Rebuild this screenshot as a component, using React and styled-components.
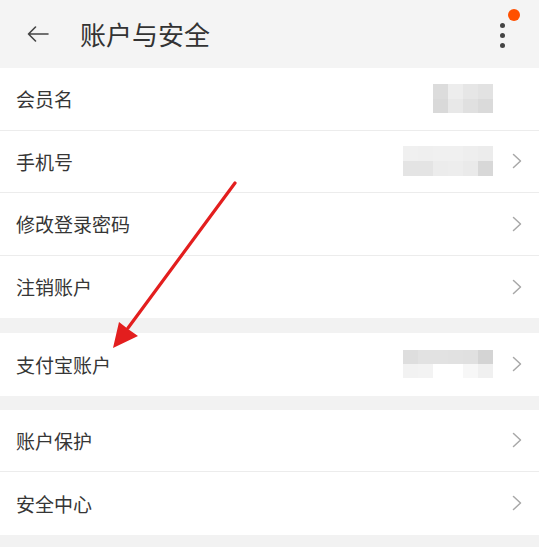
import React from 'react';
import styled, { createGlobalStyle } from 'styled-components';

const GlobalStyle = createGlobalStyle`
  body {
    margin: 0;
    background: #f2f2f2;
    font-family: "Noto Sans CJK SC", "Noto Sans", sans-serif;
  }
`;

const groups = [
  {
    gap: 15,
    rows: [
      {
        label: '会员名',
        arrow: false,
        mosaic: {
          width: 60,
          height: 29,
          cols: 4,
          cells: ['#dcdcdc', '#ededed', '#e6e6e6', '#e2e2e2', '#d9d9d9', '#e8e8e8', '#e0e0e0', '#dadada'],
        },
      },
      {
        label: '手机号',
        arrow: true,
        mosaic: {
          width: 90,
          height: 30,
          cols: 6,
          cells: [
            '#f0f0f0', '#efefef', '#f0f0f0', '#f0f0f0', '#eeeeee', '#ececec',
            '#e4e4e4', '#e4e4e4', '#ececec', '#ededed', '#eaeaea', '#d8d8d8',
          ],
        },
      },
      { label: '修改登录密码', arrow: true },
      { label: '注销账户', arrow: true },
    ],
  },
  {
    gap: 14,
    rows: [
      {
        label: '支付宝账户',
        arrow: true,
        mosaic: {
          width: 90,
          height: 28,
          cols: 6,
          cells: [
            '#dedede', '#e2e2e2', '#e2e2e2', '#e1e1e1', '#e0e0e0', '#d4d4d4',
            '#f2f2f2', '#f3f3f3', '#ffffff', '#ffffff', '#f7f7f7', '#f0f0f0',
          ],
        },
      },
    ],
  },
  {
    gap: 14,
    rows: [
      { label: '账户保护', arrow: true },
      { label: '安全中心', arrow: true },
    ],
  },
];

const Page = styled.div`
  position: relative;
  width: 539px;
  height: 547px;
  overflow: hidden;
  background: #f2f2f2;
`;

const Header = styled.header`
  height: 68px;
  display: flex;
  align-items: center;
  padding: 0 34px 0 27px;
  background: #f4f4f4;
`;

const BackButton = styled.div`
  display: flex;
  align-items: center;
  margin-right: 31px;
`;

const Title = styled.h1`
  flex: 1;
  margin: 0;
  font-size: 26px;
  font-weight: 400;
  color: #333;
  line-height: 1;
`;

const MoreButton = styled.div`
  position: relative;
  display: flex;
  flex-direction: column;
  gap: 5px;
  padding-top: 2px;
`;

const Dot = styled.span`
  width: 5px;
  height: 5px;
  border-radius: 50%;
  background: #444;
`;

const Badge = styled.span`
  position: absolute;
  top: -12px;
  left: 8px;
  width: 12px;
  height: 12px;
  border-radius: 50%;
  background: #ff5000;
`;

const Group = styled.section`
  background: #fff;
  margin-bottom: ${(p) => p.$gap}px;
`;

const Row = styled.div`
  box-sizing: border-box;
  height: 62.5px;
  display: flex;
  align-items: center;
  padding: 0 17px 0 16px;
  border-bottom: 1px solid #ececec;

  &:last-child {
    border-bottom: none;
  }
`;

const Label = styled.span`
  flex: 1;
  font-size: 19px;
  color: #363636;
`;

const Mosaic = styled.div`
  display: grid;
  grid-template-columns: repeat(${(p) => p.$cols}, 1fr);
  width: ${(p) => p.$w}px;
  height: ${(p) => p.$h}px;
  margin-right: 19px;
`;

const Chevron = styled.svg`
  width: 10px;
  height: 16px;
  visibility: ${(p) => (p.$hidden ? 'hidden' : 'visible')};
`;

const Overlay = styled.svg`
  position: absolute;
  left: 0;
  top: 0;
  pointer-events: none;
`;

const Cell = styled.span``;

function App() {
  return (
    <Page>
      <GlobalStyle />
      <Header>
        <BackButton>
          <svg width="22" height="16" viewBox="0 0 22 16" fill="none" stroke="#444" strokeWidth="1.6" strokeLinecap="round" strokeLinejoin="round">
            <path d="M21 8H1.5M8.5 1L1.5 8l7 7" />
          </svg>
        </BackButton>
        <Title>账户与安全</Title>
        <MoreButton>
          <Dot />
          <Dot />
          <Dot />
          <Badge />
        </MoreButton>
      </Header>
      {groups.map((g, gi) => (
        <Group key={gi} $gap={g.gap}>
          {g.rows.map((r) => (
            <Row key={r.label}>
              <Label>{r.label}</Label>
              {r.mosaic && (
                <Mosaic $cols={r.mosaic.cols} $w={r.mosaic.width} $h={r.mosaic.height}>
                  {r.mosaic.cells.map((c, i) => (
                    <Cell key={i} style={{ background: c }} />
                  ))}
                </Mosaic>
              )}
              <Chevron $hidden={!r.arrow} viewBox="0 0 10 16" fill="none" stroke="#a8a8a8" strokeWidth="1.5" strokeLinecap="round" strokeLinejoin="round">
                <polyline points="1.5,1.5 8.5,8 1.5,14.5" />
              </Chevron>
            </Row>
          ))}
        </Group>
      ))}
      <Overlay width="539" height="547" viewBox="0 0 539 547">
        <line x1="235" y1="183" x2="128" y2="328" stroke="#e31e1e" strokeWidth="3.2" strokeLinecap="round" />
        <polygon points="113,348 119,322 128,329 138,336" fill="#e31e1e" />
      </Overlay>
    </Page>
  );
}

export default App;
